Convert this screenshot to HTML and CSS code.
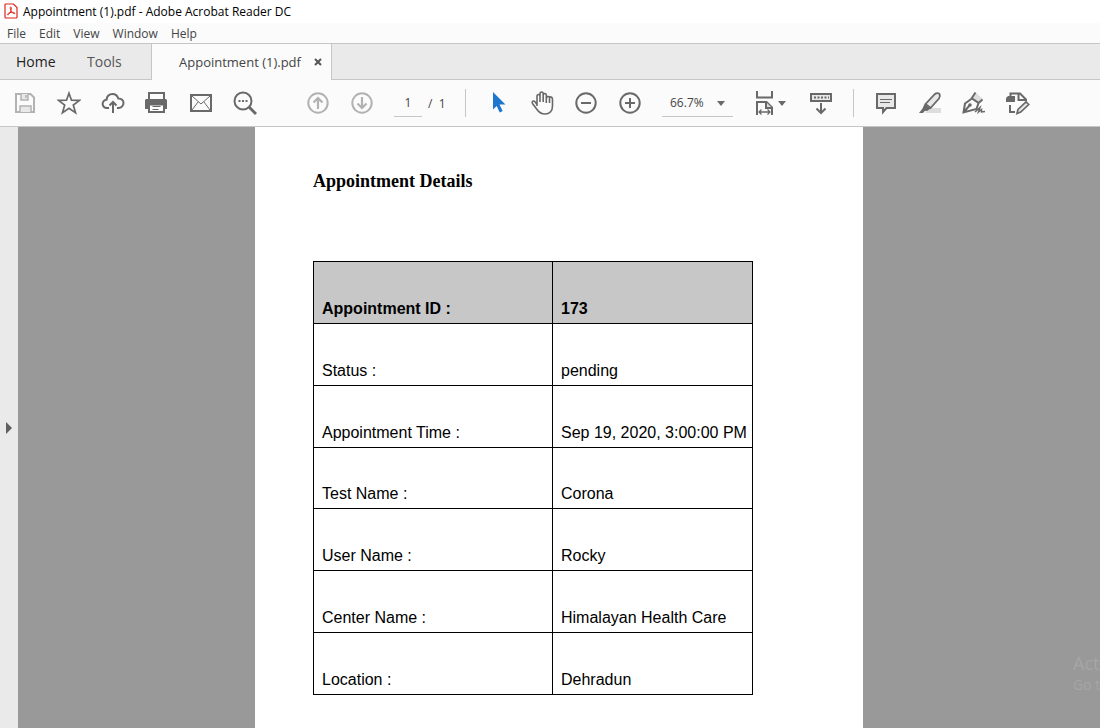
FILE: index.html
```html
<!DOCTYPE html>
<html lang="en">
<head>
<meta charset="utf-8">
<title>Appointment (1).pdf - Adobe Acrobat Reader DC</title>
<link rel="stylesheet" href="styles.css">
</head>
<body>
<div class="app">
  <header class="titlebar">
    <svg class="logo" width="14" height="16" viewBox="0 0 14 16" fill="none" stroke="#e2231a">
      <path d="M1.500 1h8L13 4.500V14a1 1 0 0 1-1 1H2a1 1 0 0 1-1-1V1.500z" fill="#fff" stroke-width="1.200"/>
      <path d="M3.700 11.800c-1-.8 1.400-2 3.300-2.400 2-.4 4 .1 3.800 1-.3 1.200-3-.8-4-3C6.200 6 6 4 6.700 4s.8 1.600.3 3.400c-.6 2-2.400 5-3.300 4.400z"/>
    </svg>
    <span>Appointment (1).pdf - Adobe Acrobat Reader DC</span>
  </header>
  <nav class="menubar">
    <button>File</button><button>Edit</button><button>View</button><button>Window</button><button>Help</button>
  </nav>
  <nav class="tabs">
    <button class="tab home">Home</button>
    <button class="tab tools">Tools</button>
    <div class="doc-tab">
      <button class="doc-name">Appointment (1).pdf</button>
      <button class="close" aria-label="Close tab"><svg width="8" height="8" viewBox="0 0 8 8" stroke="#555" stroke-width="2"><path d="M1 1l6 6M7 1L1 7"/></svg></button>
    </div>
  </nav>
  <div class="toolbar">
    <div class="group">
      <button class="tool light" aria-label="Save"><svg viewBox="0 0 24 24"><path d="M3 3h14.500L21 6.500V21H3z"/><path d="M8 3v6h7V3M7 21v-6h11v6" fill="#e8e8e8" stroke-width="1.500"/><path d="M13 4v3" stroke-width="1.500"/></svg></button>
      <button class="tool" aria-label="Star"><svg viewBox="0 0 24 24"><path d="M12 2.200l2.500 7 8 .2-6.200 4.700 2.200 7.500-6.500-4.400-6.500 4.400 2.200-7.500L1.500 9.400l8-.2z" stroke-width="1.700"/></svg></button>
      <button class="tool" aria-label="Upload"><svg viewBox="0 0 24 24"><path d="M8 17H6a4 4 0 0 1-.5-8.200C6 5 8.500 3 11.500 3c3 0 5 1.800 5.800 4.500C20.500 7.400 22.500 9.500 22.500 12s-2 5-5 5H16M12 22V11M8.500 14.500L12 11l3.500 3.500"/></svg></button>
      <button class="tool" aria-label="Print"><svg viewBox="0 0 24 24"><path d="M4 8V2h15v6"/><path d="M1 8h20l1 1v9h-4v-4H4v4H0V9z" class="solid" stroke="none"/><path d="M4 13.500h15V21H4z" fill="#fff"/><path d="M7.500 15.500h8M7.500 18.500h6" stroke-width="1"/></svg></button>
      <button class="tool" aria-label="Email"><svg viewBox="0 0 24 24"><path d="M2 4h20v16H2z"/><path d="M3 5l9 8 9-8M3 19l6-8M21 19l-6-8" stroke-width="1"/></svg></button>
      <button class="tool" aria-label="Search"><svg viewBox="0 0 24 24"><circle cx="10" cy="10" r="8.500"/><path d="M16 16l7 7" stroke-width="2.800"/><path d="M5.500 10h9.500" stroke-dasharray="2 1.500"/></svg></button>
    </div>
    <div class="group">
      <button class="tool light" aria-label="Previous page"><svg viewBox="0 0 24 24"><circle cx="12" cy="12" r="9.700"/><path d="M12 18V7M7.500 11.500L12 7l4.500 4.500" stroke-width="2.200"/></svg></button>
      <button class="tool light" aria-label="Next page"><svg viewBox="0 0 24 24"><circle cx="12" cy="12" r="9.700"/><path d="M12 6v11M7.500 12.500L12 17l4.500-4.500" stroke-width="2.200"/></svg></button>
      <div class="pager"><input class="page-input" aria-label="Page number" value="1"><span>/&nbsp; 1</span></div>
      <span class="sep"></span>
      <button class="tool" aria-label="Select"><svg viewBox="0 0 24 24"><path d="M7 1l12.500 12.500h-6l3.200 6.500-3 1.400-3-6.400L7 18.500z" fill="#1f76cf" stroke="none"/></svg></button>
      <button class="tool" aria-label="Pan"><svg viewBox="0 0 24 24"><path d="M7 15V5.500c0-2.600 3-2.600 3 0V11 3c0-2.600 3.200-2.600 3.200 0v8-6.500c0-2.600 3.100-2.600 3.100 0V12 7.500c0-2 2.200-2.500 3.200-1.500 1.500-.5 3 .3 3 2.500V15c0 5-3 8-7.500 8-4 0-6-1.500-8-4.500l-4.500-6c-1.200-2 1-3.300 2.500-1.800L7 13.500M19.500 6v6" stroke-width="1.600"/></svg></button>
      <button class="tool" aria-label="Zoom out"><svg viewBox="0 0 24 24"><circle cx="12" cy="12" r="9.700"/><path d="M7 12h10"/></svg></button>
      <button class="tool" aria-label="Zoom in"><svg viewBox="0 0 24 24"><circle cx="12" cy="12" r="9.700"/><path d="M7 12h10M12 7v10"/></svg></button>
      <div class="zoom-box">
        <select class="zoom-select" aria-label="Zoom level"><option>66.7%</option></select>
        <svg class="caret" width="8" height="5" viewBox="0 0 8 5"><path d="M0 0h8L4 5z"/></svg>
      </div>
      <button class="tool wide" aria-label="Fit width"><svg viewBox="0 0 24 24"><path d="M4 0v6.500h15V0M4 24V11h9.500L19 16.500V24"/><path d="M13 11v6h6" fill="#ddd"/><path d="M6 21h11M8.500 18.500L6 21l2.500 2.500M14.500 18.500L17 21l-2.500 2.500" stroke-width="1.300"/></svg><svg class="mini-caret" viewBox="0 0 8 5"><path d="M0 0h8L4 5z"/></svg></button>
      <button class="tool" aria-label="Show toolbar below"><svg viewBox="0 0 24 24"><path d="M2 3h20v7H2z" fill="#e8e8e8"/><path d="M5 6.500h15" stroke-dasharray="2 1.500"/><path d="M12 12v10M7.500 17.500L12 22l4.500-4.500"/></svg></button>
      <span class="sep"></span>
      <button class="tool" aria-label="Comment"><svg viewBox="0 0 24 24"><path d="M3 3h18v14h-8.500L9 21v-4H3z" fill="#e8e8e8"/><path d="M6 8.500h12M6 11.500h10" stroke-width="1.200"/></svg></button>
      <button class="tool" aria-label="Highlight"><svg viewBox="0 0 24 24"><path d="M11 17h12v5H7z" fill="#ddd" stroke="none"/><path d="M7.500 13L17 3c1.500-1.500 4-1 4.500 0s.5 3-.5 4.500L12.500 17z" fill="#e8e8e8" stroke-width="1.800"/><path d="M6.500 13l6 4.500-3.500 2.500-2-.3L5 22H1l3.500-4.500z" class="solid" stroke="none"/></svg></button>
      <button class="tool" aria-label="Sign"><svg viewBox="0 0 24 24"><path d="M11 7l3-5 7 6-4 4z" fill="#ddd" stroke="none"/><path d="M1.500 21.500L3 12.500 10 7.500l6.500 4.500-2 6zM2 21l5.500-6.500M9.500 7.500l4-6M16 12.500l4.500-4"/><circle cx="8" cy="14" r=".8" class="solid"/><path d="M13 21l5-4.500-1.500 4.500 3-2.500v2.500l3.500-.5" stroke-width="1.500"/></svg></button>
      <button class="tool" aria-label="Fill and edit"><svg viewBox="0 0 24 24"><path d="M4.500 5V2.500H14l6 6v2M12.500 3v6H20M4 14v7h5"/><path d="M0 7l2-2h7v6H0z" class="solid" stroke="none"/><path d="M11 22.500l1-4 8-7.500 2.700 2.500-8 7.500z" fill="#e8e8e8" stroke-width="1.700"/></svg></button>
    </div>
  </div>
  <main class="workspace">
    <button class="side" aria-label="Open side panel"><svg width="6" height="12" viewBox="0 0 6 12"><path d="M0 0l6 6-6 6z" fill="#606060"/></svg></button>
    <section class="viewer">
      <article class="page">
        <h1 class="heading">Appointment Details</h1>
        <table class="details">
          <tbody>
            <tr><th>Appointment ID :</th><th class="value">173</th></tr>
            <tr><td>Status :</td><td>pending</td></tr>
            <tr><td>Appointment Time :</td><td>Sep 19, 2020, 3:00:00 PM</td></tr>
            <tr><td>Test Name :</td><td>Corona</td></tr>
            <tr><td>User Name :</td><td>Rocky</td></tr>
            <tr><td>Center Name :</td><td>Himalayan Health Care</td></tr>
            <tr><td>Location :</td><td>Dehradun</td></tr>
          </tbody>
        </table>
      </article>
      <div class="watermark"><div class="mark-title">Act</div><div>Go t</div></div>
    </section>
  </main>
</div>
</body>
</html>
```
FILE: styles.css
```css
* { box-sizing: border-box; }
body { margin: 0; font-family: "Open Sans", "Noto Sans", sans-serif; font-size: 12px; color: #444; }
button { border: 0; background: none; padding: 0; font: inherit; color: inherit; }
svg { display: block; }
.app { display: flex; flex-direction: column; height: 100vh; overflow: hidden; background: #fbfbfb; }

.titlebar { display: flex; align-items: center; gap: 5px; flex: none; height: 23px; padding-left: 4px; background: #fff; color: #000; white-space: nowrap; }
.logo { flex: none; margin-bottom: 2px; }
.menubar { display: flex; flex: none; gap: 13px; height: 20px; padding-left: 7px; align-items: center; }

.tabs { display: flex; flex: none; height: 37px; background: #eaeaea; border: solid #c6c6c6; border-width: 1px 0; font-size: 14px; }
.tab { padding-left: 16px; color: #222; }
.tab.tools { width: 93px; padding-left: 29px; text-align: left; color: #555; }
.tab.home { width: 58px; text-align: left; }
.doc-tab { display: flex; align-items: center; width: 181px; margin-bottom: -1px; padding-left: 27px; gap: 13px; background: #fbfbfb; border: solid #c6c6c6; border-width: 0 1px; font-size: 13px; white-space: nowrap; }

.toolbar { display: flex; flex: none; align-items: center; gap: 49px; height: 47px; padding-left: 13px; border-bottom: 1px solid #c6c6c6; }
.group { display: flex; align-items: center; gap: 20px; }
.tool { flex: none; width: 24px; height: 24px; }
.tool svg { width: 24px; height: 24px; fill: none; stroke: #696969; stroke-width: 2; }
.tool.light svg { stroke: #b2b2b2; }
.tool .solid { fill: #696969; }
.tool.wide { display: flex; align-items: center; width: 36px; gap: 1px; }
.tool.wide svg { flex: none; }
.tool .mini-caret { width: 8px; height: 5px; fill: #696969; stroke: none; }
.pager { display: flex; align-items: center; gap: 6px; width: 51px; white-space: nowrap; font-size: 12px; }
.page-input { width: 28px; height: 28px; padding: 0; border: 0; border-bottom: 1px solid #c6c6c6; background: none; font: inherit; color: inherit; text-align: center; }
.sep { width: 1px; height: 28px; background: #c6c6c6; }
.zoom-box { position: relative; width: 71px; }
.zoom-select { appearance: none; display: block; width: 100%; height: 28px; padding: 0 0 0 8px; border: 0; border-bottom: 1px solid #c6c6c6; border-radius: 0; background: none; font: inherit; color: inherit; }
.caret { position: absolute; right: 8px; top: 12px; fill: #696969; pointer-events: none; }

.workspace { display: flex; flex: 1; min-height: 0; }
.side { flex: none; width: 18px; padding-left: 6px; background: #eaeaea; }
.viewer { position: relative; display: flex; flex: 1; justify-content: center; overflow: hidden; background: #999; }
.page { width: 608px; padding: 44px 58px 0; background: #fff; color: #000; }
.heading { margin: 0 0 69px; font: bold 18px/21px "Liberation Serif", serif; }
.details { width: 440px; height: 434px; table-layout: fixed; border-collapse: collapse; font: 16px/20px "Liberation Sans", sans-serif; white-space: nowrap; }
.details th, .details td { padding: 0 0 4px 8px; border: 1px solid #000; text-align: left; vertical-align: bottom; }
.details th { background: #c7c7c7; }
.details .value { width: 200px; }
.watermark { position: absolute; right: 0; bottom: 33px; width: 27px; overflow: hidden; color: #a6a6a6; font-size: 14px; line-height: 20px; white-space: nowrap; }
.mark-title { font-size: 18px; line-height: 24px; }
```
